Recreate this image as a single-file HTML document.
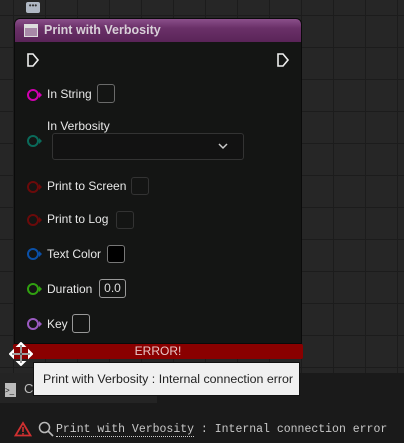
<!DOCTYPE html><html><head><style>
body{margin:0;width:404px;height:443px;overflow:hidden;background:#262626;font-family:"Liberation Sans",sans-serif;position:relative}
.grid{position:absolute;left:0;top:0;width:404px;height:373px;background-image:linear-gradient(#1c1c1c 1px,transparent 1px),linear-gradient(90deg,#1c1c1c 1px,transparent 1px);background-size:32px 32px;background-position:13px 15px}
.node{position:absolute;left:14px;top:18px;width:288px;height:326px;background:#141514;border:1px solid #0a0a0a;border-radius:6px 6px 0 0;box-sizing:border-box}
.title{position:absolute;left:0;top:0;width:286px;height:23px;border-radius:5px 5px 0 0;background:linear-gradient(180deg,#8a4f8a 0%,#6a3068 40%,#5a2458 100%);color:#d8d0d8;font-weight:bold;font-size:12.5px;line-height:23px}
.title .ic{position:absolute;left:9px;top:5px;width:14px;height:13px;background:linear-gradient(#ddd 0 3px,#a889a8 3px);border:1px solid #ddd;box-sizing:border-box}
.title span{position:absolute;left:29px}
.t{position:absolute;color:#e8e8e8;font-size:12px}
.pin{position:absolute;width:8px;height:8px;border:2px solid;border-radius:50%}
.pin:after{content:"";position:absolute;left:10px;top:1px;border-left:3px solid;border-color:inherit;border-top:3px solid transparent;border-bottom:3px solid transparent}
.box{position:absolute;border:1px solid #6a6a6a;border-radius:3px;box-sizing:border-box}
</style></head><body>
<div class="grid"></div>
<div style="position:absolute;left:26px;top:2px;width:14px;height:11px;background:#b0b8c4;border-radius:2px;font-size:8px;line-height:8px;text-align:center;color:#333">•••</div>
<div class="node"><div class="title"><div class="ic"></div><span>Print with Verbosity</span></div></div>
<svg style="position:absolute;left:26px;top:52px" width="14" height="16"><path d="M2 2h5l5 6-5 6H2z" fill="none" stroke="#eee" stroke-width="1.6"/></svg>
<svg style="position:absolute;left:276px;top:52px" width="14" height="16"><path d="M2 2h5l5 6-5 6H2z" fill="none" stroke="#eee" stroke-width="1.6"/></svg>
<div class="pin" style="left:27px;top:89px;color:#d000b0;border-color:#d000b0"></div><div class="t" style="left:47px;top:87px">In String</div><div class="box" style="left:97px;top:84px;width:18px;height:19px"></div>
<div class="t" style="left:47px;top:119px">In Verbosity</div>
<div class="pin" style="left:27px;top:135px;border-color:#0a6a5a"></div>
<div class="box" style="left:52px;top:133px;width:192px;height:27px;background:#121212;border-color:#333"></div>
<svg style="position:absolute;left:217px;top:142px" width="12" height="8"><path d="M2 2l4 4 4-4" fill="none" stroke="#ccc" stroke-width="1.5"/></svg>
<div class="pin" style="left:27px;top:181px;border-color:#6a0a0a"></div><div class="t" style="left:47px;top:179px">Print to Screen</div><div class="box" style="left:131px;top:177px;width:18px;height:18px;border-color:#333"></div>
<div class="pin" style="left:27px;top:214px;border-color:#6a0a0a"></div><div class="t" style="left:47px;top:212px">Print to Log</div><div class="box" style="left:116px;top:211px;width:18px;height:18px;border-color:#333"></div>
<div class="pin" style="left:27px;top:248px;border-color:#0a50a8"></div><div class="t" style="left:47px;top:247px">Text Color</div><div class="box" style="left:107px;top:245px;width:18px;height:18px;background:#000;border-color:#777"></div>
<div class="pin" style="left:27px;top:283px;border-color:#30a010"></div><div class="t" style="left:47px;top:282px">Duration</div><div class="box" style="left:99px;top:279px;width:27px;height:19px;border-color:#999;color:#ddd;font-size:12px;text-align:center;line-height:17px">0.0</div>
<div class="pin" style="left:27px;top:318px;border-color:#9a5ac0"></div><div class="t" style="left:47px;top:317px">Key</div><div class="box" style="left:72px;top:314px;width:18px;height:19px;border-color:#999"></div>
<div style="position:absolute;left:13px;top:344px;width:290px;height:15px;background:#8a0000;border-radius:2px;color:#e8c8c8;font-size:12px;text-align:center;line-height:15px">ERROR!</div>
<div style="position:absolute;left:0;top:373px;width:404px;height:70px;background:#1a1a1a"></div>
<div style="position:absolute;left:0;top:373px;width:157px;height:30px;background:#242424"></div>
<div style="position:absolute;left:5px;top:383px;width:11px;height:14px;background:#bbb;font-size:8px;color:#222;line-height:16px">&gt;_</div>
<div style="position:absolute;left:24px;top:381px;color:#bbb;font-size:13px">C</div>
<div style="position:absolute;left:33px;top:362px;width:267px;height:34px;background:#f0f0f0;border:1px solid #111;box-sizing:border-box;color:#222;font-size:12.4px;line-height:32px;padding-left:9px;white-space:nowrap">Print with Verbosity : Internal connection error</div>
<svg style="position:absolute;left:9px;top:342px" width="24" height="24"><path d="M12 1v22M1 12h22M12 1l-3 3h6zM12 23l-3-3h6zM1 12l3-3v6zM23 12l-3-3v6z" stroke="#fff" stroke-width="2" fill="#fff"/><path d="M12 3v18M3 12h18" stroke="#000" stroke-width="0.8"/></svg>
<svg style="position:absolute;left:14px;top:421px" width="18" height="16"><path d="M9 2L1.5 14.5h15z" fill="none" stroke="#d03030" stroke-width="1.8"/><path d="M9 6v5M9 12v1.5" stroke="#d03030" stroke-width="1.6"/></svg>
<svg style="position:absolute;left:38px;top:421px" width="16" height="16"><circle cx="6.5" cy="6.5" r="5" fill="none" stroke="#bbb" stroke-width="1.5"/><path d="M10 10l5 5" stroke="#bbb" stroke-width="1.6"/></svg>
<div style="position:absolute;left:56px;top:423px;color:#c8c8c8;font-family:'Liberation Mono',monospace;font-size:11.5px;white-space:nowrap"><span style="border-bottom:1px dotted #ccc">Print with Verbosity</span> : Internal connection error</div>
</body></html>
